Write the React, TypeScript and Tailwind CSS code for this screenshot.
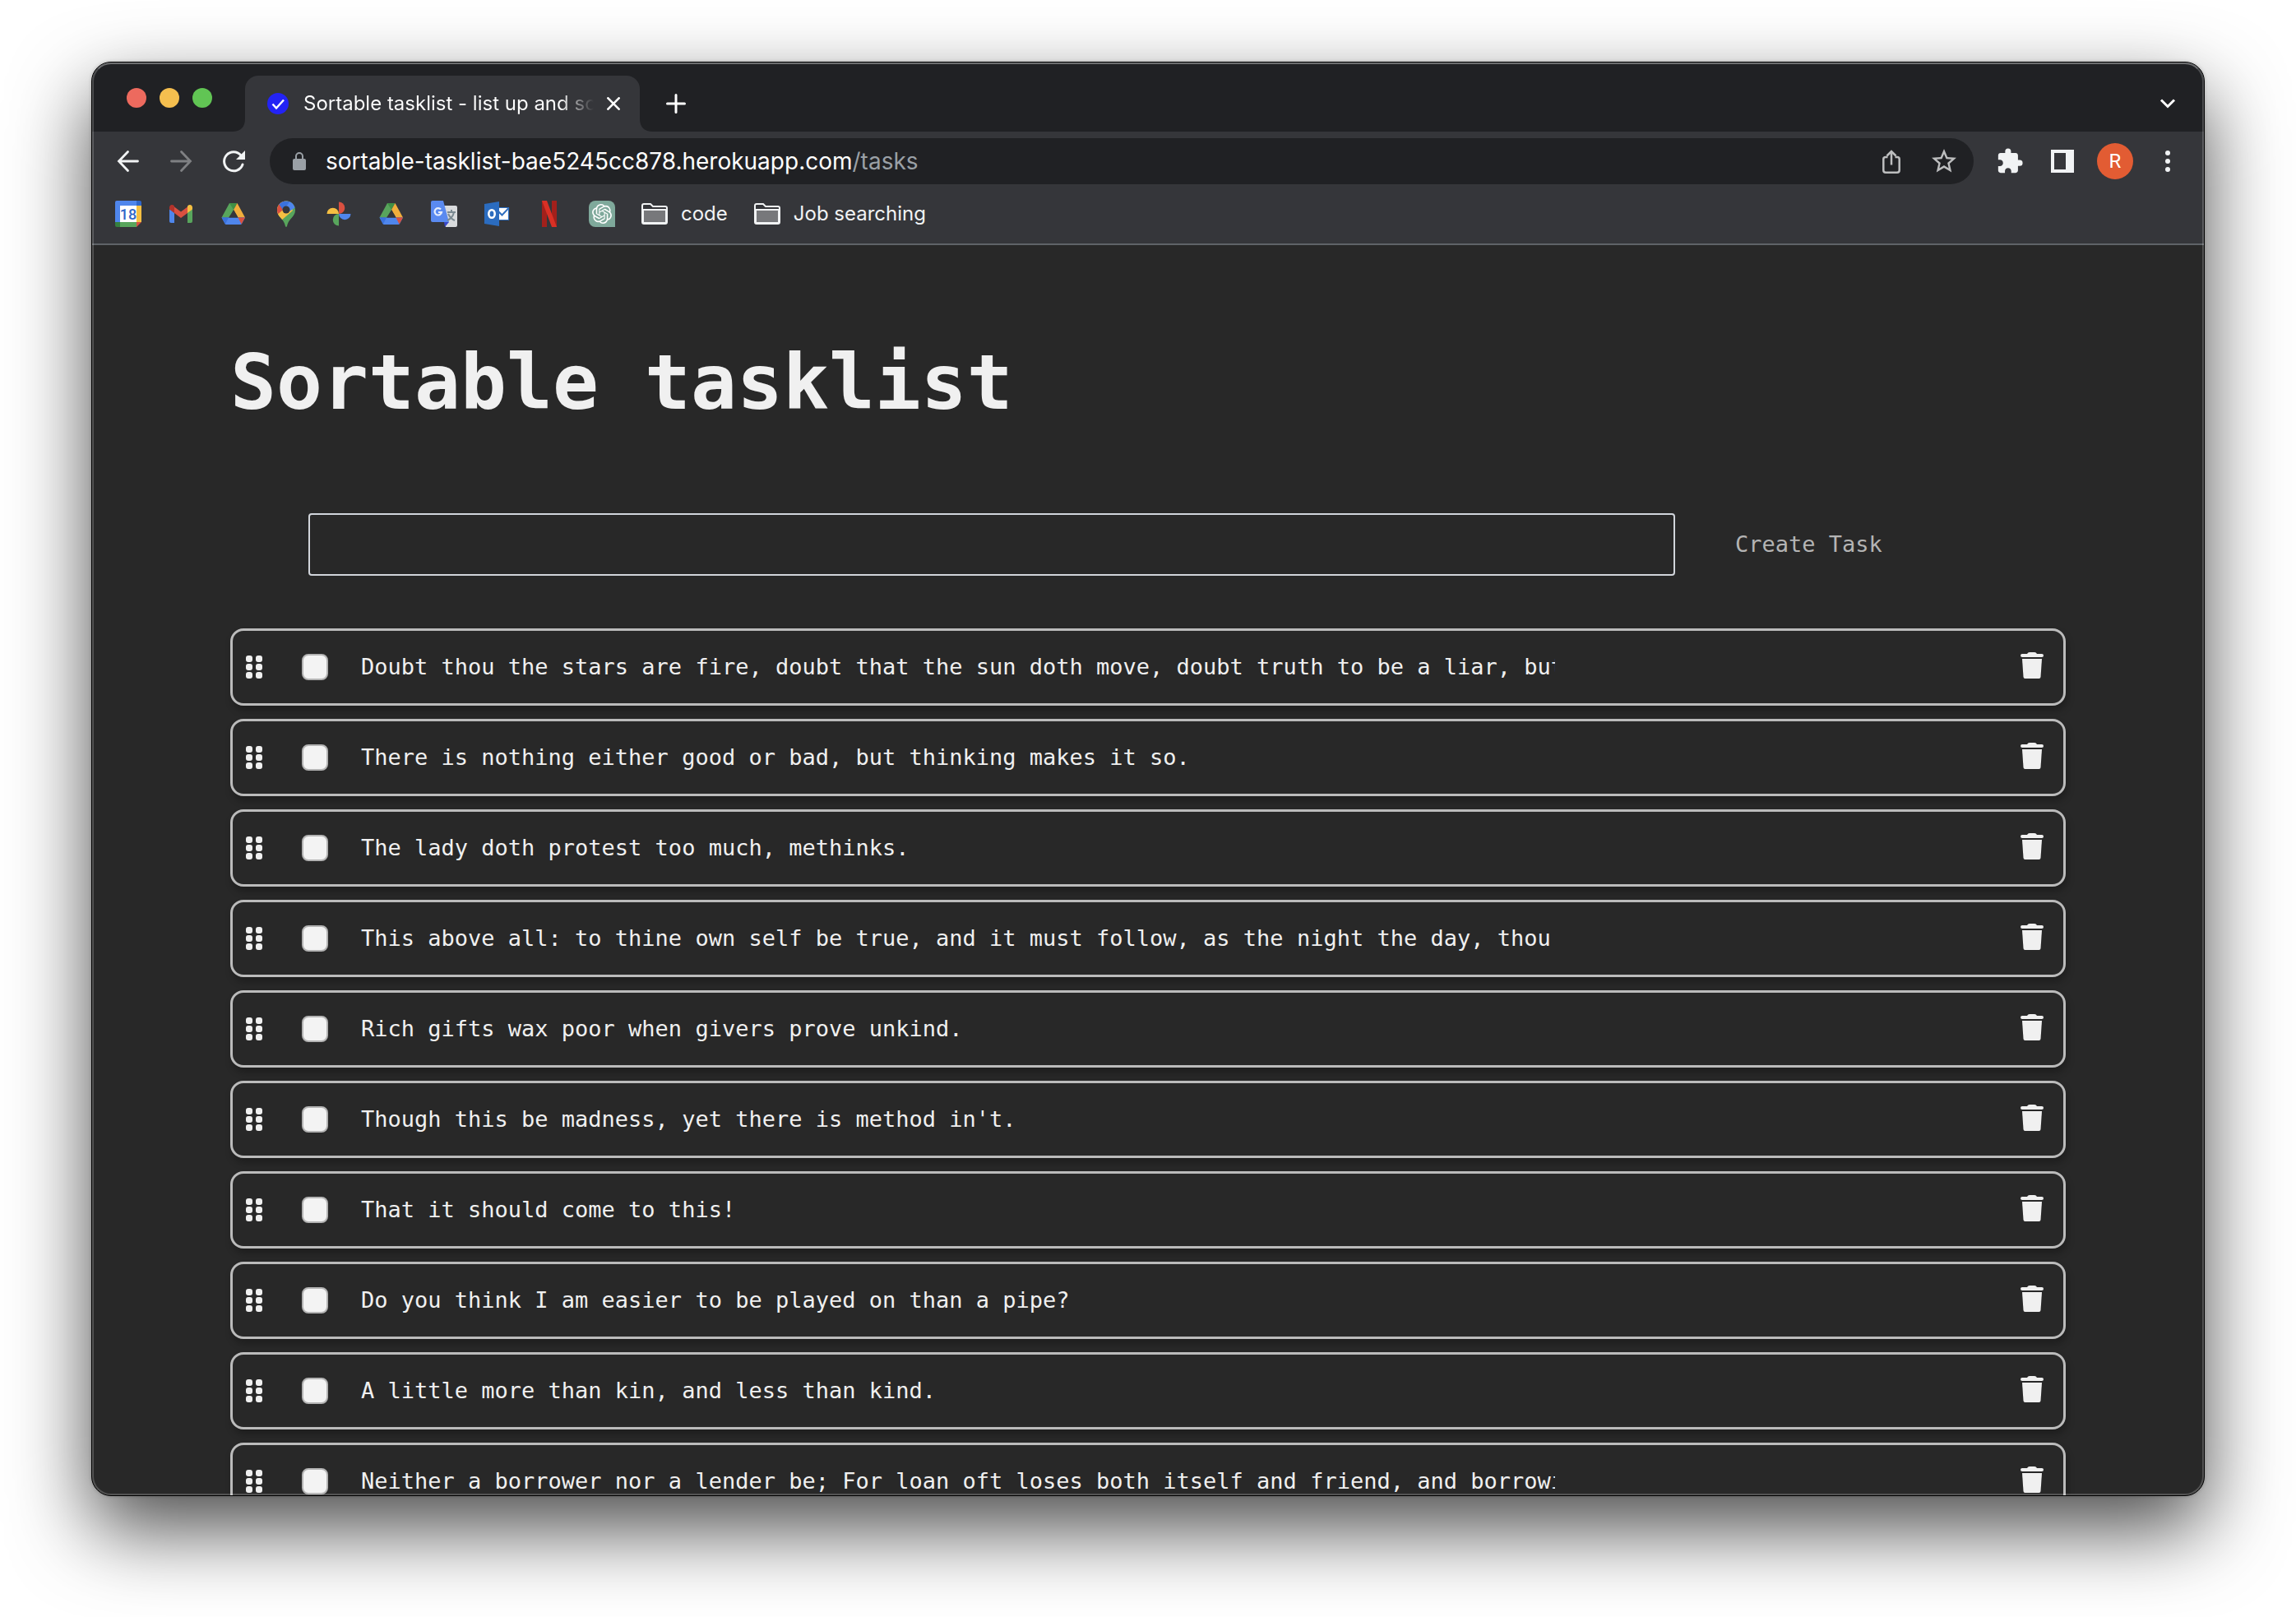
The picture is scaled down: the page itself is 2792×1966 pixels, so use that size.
import React from "react";
import { MdExtension, MdStarBorder } from "react-icons/md";
import { SiOpenai } from "react-icons/si";

const tasks = [
  "Doubt thou the stars are fire, doubt that the sun doth move, doubt truth to be a liar, but never doubt I love.",
  "There is nothing either good or bad, but thinking makes it so.",
  "The lady doth protest too much, methinks.",
  "This above all: to thine own self be true, and it must follow, as the night the day, thou",
  "Rich gifts wax poor when givers prove unkind.",
  "Though this be madness, yet there is method in't.",
  "That it should come to this!",
  "Do you think I am easier to be played on than a pipe?",
  "A little more than kin, and less than kind.",
  "Neither a borrower nor a lender be; For loan oft loses both itself and friend, and borrowing dulls the edge of husbandry.",
];

function Calendar() {
  return (
    <svg viewBox="0 0 32 32" className="size-8">
      <path d="M2 0H26V6H6V26H0V2Q0 0 2 0Z" fill="#4f86ec" />
      <path d="M26 0H30Q32 0 32 2V6H26Z" fill="#2f66c9" />
      <path d="M26 6H32V26H26Z" fill="#f5bf42" />
      <path d="M6 26H26V32H6Z" fill="#58a55c" />
      <path d="M0 26H6V32H2Q0 32 0 30Z" fill="#35803f" />
      <path d="M26 26H32L26 32Z" fill="#d95040" />
      <path d="M6 6H26V26H6Z" fill="#fff" />
      <text x="16" y="22.500" textAnchor="middle" fontSize="18" fontWeight="500" fontFamily="Roboto, sans-serif" fill="#2f66c9">18</text>
    </svg>
  );
}

function Gmail() {
  return (
    <svg viewBox="0 0 32 32" className="size-8">
      <path d="M2 10L8 14.500V27H4Q2 27 2 25Z" fill="#4f86ec" />
      <path d="M30 10L24 14.500V27H28Q30 27 30 25Z" fill="#58a55c" />
      <path d="M8 7.500L16 13.500L24 7.500V15L16 21L8 15Z" fill="#d95040" />
      <path d="M2 8.500C2 5 5.500 4 8 6.500V15L2 10.500Z" fill="#b3332b" />
      <path d="M30 8.500C30 5 26.500 4 24 6.500V15L30 10.500Z" fill="#f5bf42" />
    </svg>
  );
}

function Drive() {
  return (
    <svg viewBox="0 0 32 32" className="size-8">
      <path d="M11 3H16L16 12.500L10 20.500H1.500Z" fill="#58a55c" />
      <path d="M11 3H20.500L16 11Z" fill="#3f8f45" />
      <path d="M20.500 3L30 20.500H21.500L16 11Z" fill="#f1ae3c" />
      <path d="M1.500 20.500H30L26 28Q25.500 29 24.500 29H7Q6 29 5.500 28Z" fill="#4f86ec" />
      <path d="M1.500 20.500H10L6 28.500Z" fill="#3a72dd" />
      <path d="M21.500 20.500H30L25.500 28.500Z" fill="#d95040" />
      <path d="M16 11L21.500 20.500H10.500Z" fill="#35363a" />
    </svg>
  );
}

function Maps() {
  return (
    <svg viewBox="0 0 32 32" className="size-8">
      <defs>
        <clipPath id="pin">
          <path d="M16 0.500C22 0.500 27 5 27 11.500C27 20 18.500 22 17 31Q16 33 15 31C13.500 22 5 20 5 11.500C5 5 10 0.500 16 0.500Z" />
        </clipPath>
      </defs>
      <g clipPath="url(#pin)">
        <path d="M0 0H32V32H0Z" fill="#58a55c" />
        <path d="M0 0H20L16 11L4 25Z" fill="#f5bf42" />
        <path d="M4 18L20 1L24 12L10 24Z" fill="#f5bf42" />
        <path d="M0 0H14L16 8L5 17H0Z" fill="#d95040" />
        <path d="M7 4L16 -2L22 2L12 11Z" fill="#3a72dd" />
        <path d="M21 0L29 7L20 13L14 10Z" fill="#4f86ec" />
      </g>
      <circle cx="16" cy="11" r="4.500" fill="#35363a" />
    </svg>
  );
}

function Photos() {
  return (
    <svg viewBox="0 0 32 32" className="size-8">
      <path d="M16 1.500A7.250 7.250 0 0 1 16 16Z" fill="#d95040" />
      <path d="M30.500 16A7.250 7.250 0 0 1 16 16Z" fill="#4f86ec" />
      <path d="M16 30.500A7.250 7.250 0 0 1 16 16Z" fill="#58a55c" />
      <path d="M1.500 16A7.250 7.250 0 0 1 16 16Z" fill="#f5bf42" />
    </svg>
  );
}

function Translate() {
  return (
    <svg viewBox="0 0 32 32" className="size-8">
      <path d="M13 6H30Q32 6 32 8V30Q32 32 30 32H18Z" fill="#d9dbdd" />
      <path d="M16 26H22L17 32Z" fill="#3a48c8" />
      <path d="M2 0H15L22 26H2Q0 26 0 24V2Q0 0 2 0Z" fill="#5a8af0" />
      <path d="M20 14H30M25 11V14M28 14C27 19 24 22 20 24M21 16C23 20 26 23 29 24" stroke="#7b8a92" strokeWidth="2" fill="none" />
      <path d="M12 10.500A4.200 4.200 0 1 0 13 14H9" stroke="#e6eefc" strokeWidth="2.200" fill="none" />
    </svg>
  );
}

function Outlook() {
  return (
    <svg viewBox="0 0 32 32" className="size-8">
      <path d="M17 8.500H30.500V23.500H17Z" fill="#fff" stroke="#2f6fc0" strokeWidth="1.200" />
      <path d="M18 13L22.500 17.500L30.500 9" stroke="#2f6fc0" strokeWidth="2" fill="none" />
      <path d="M1 4L19 1V31L1 28Z" fill="#2b6cbf" />
      <ellipse cx="10" cy="16" rx="3.700" ry="4.800" stroke="#fff" strokeWidth="2.600" fill="none" />
    </svg>
  );
}

function Netflix() {
  return (
    <svg viewBox="0 0 32 32" className="size-8">
      <path d="M7 0H13V32H7Z" fill="#a3201b" />
      <path d="M19 0H25V32H19Z" fill="#a3201b" />
      <path d="M7 0H13L25 32H19Z" fill="#d93025" />
    </svg>
  );
}

function ChatGpt() {
  return (
    <span className="flex size-8 items-center justify-center rounded-lg rounded-br-none bg-[#7fa99b] text-white">
      <SiOpenai className="size-6" />
    </span>
  );
}

function Folder() {
  return (
    <svg viewBox="0 0 32 28" className="h-7 w-8" fill="none" stroke="#f1f3f4" strokeWidth="2">
      <path d="M2 9H30V24Q30 25 29 25H3Q2 25 2 24Z" fill="#77787b" />
      <path d="M1 4Q1 2 3 2H11L14 5H29Q31 5 31 7V24Q31 26 29 26H3Q1 26 1 24ZM1 9H31" />
    </svg>
  );
}

function Tab() {
  return (
    <div className="relative flex h-17 w-120 items-center rounded-t-2xl bg-[#35363a] pr-5 pl-[27px]">
      <svg viewBox="0 0 16 16" className="absolute bottom-0 -left-4 size-4" fill="#35363a"><path d="M16 0V16H0Q16 16 16 0Z" /></svg>
      <svg viewBox="0 0 16 16" className="absolute -right-4 bottom-0 size-4" fill="#35363a"><path d="M0 0V16H16Q0 16 0 0Z" /></svg>
      <svg viewBox="0 0 26 26" className="size-[26px] shrink-0">
        <circle cx="13" cy="13" r="13" fill="#2323f5" />
        <path d="M6.500 13.500L11 18.500L20 8.500" stroke="#fff" strokeWidth="2.500" fill="none" />
      </svg>
      <span className="ml-[18px] flex-1 overflow-hidden bg-linear-to-r from-white from-88% to-transparent bg-clip-text text-[24px] whitespace-nowrap text-transparent">
        Sortable tasklist - list up and sort
      </span>
      <button aria-label="Close tab" className="ml-3 flex size-6 items-center justify-center">
        <svg viewBox="0 0 16 16" className="size-4" stroke="#fff" strokeWidth="2.600"><path d="M0.500 0.500L15.500 15.500M15.500 0.500L0.500 15.500" /></svg>
      </button>
    </div>
  );
}

function Browser() {
  return (
    <header className="shrink-0 border-b-2 border-[#5f6368] bg-[#35363a] font-[Inter,sans-serif] text-[#f1f3f4]">
      <div className="flex h-21 items-end bg-[#202124] pl-[42px]">
        <div className="flex gap-4 self-center pt-0.5">
          <span className="size-6 rounded-full bg-[#ed6a5e]" />
          <span className="size-6 rounded-full bg-[#f5bf4f]" />
          <span className="size-6 rounded-full bg-[#61c554]" />
        </div>
        <div className="ml-10"><Tab /></div>
        <div className="flex h-17 flex-1 items-center justify-between pr-8 pl-8">
          <button aria-label="New tab">
            <svg viewBox="0 0 24 24" className="size-6" stroke="#fff" strokeWidth="3" strokeLinecap="round"><path d="M12 1.500V22.500M1.500 12H22.500" /></svg>
          </button>
          <button aria-label="Search tabs">
            <svg viewBox="0 0 24 24" className="size-6" stroke="#fff" strokeWidth="3" fill="none"><path d="M4 7.500L12 15.500L20 7.500" /></svg>
          </button>
        </div>
      </div>
      <div className="flex h-18 items-center pr-3 pl-7">
        <div className="flex gap-8">
          <button aria-label="Back">
            <svg viewBox="0 0 32 32" className="size-8" stroke="#f1f3f4" strokeWidth="2.800" strokeLinecap="round" fill="none"><path d="M27.500 16H4.500M15.500 4.500L4.500 16L15.500 27.500" /></svg>
          </button>
          <button aria-label="Forward">
            <svg viewBox="0 0 32 32" className="size-8" stroke="#7f8083" strokeWidth="2.800" strokeLinecap="round" fill="none"><path d="M4.500 16H27.500M16.500 4.500L27.500 16L16.500 27.500" /></svg>
          </button>
          <button aria-label="Reload">
            <svg viewBox="0 0 32 32" className="size-8" fill="none">
              <path d="M27 20A11.500 11.500 0 1 1 25 9" stroke="#f1f3f4" strokeWidth="3" strokeLinecap="round" />
              <path d="M30 3V14H19Z" fill="#f1f3f4" />
            </svg>
          </button>
        </div>
        <div className="ml-7 flex h-14 flex-1 items-center rounded-full bg-[#202124] pr-5 pl-7">
          <svg viewBox="0 0 16 22" className="h-[22px] w-4 shrink-0">
            <rect y="8" width="16" height="14" rx="2" fill="#9aa0a6" />
            <path d="M4 9V5A4 4 0 0 1 12 5V9" stroke="#9aa0a6" strokeWidth="2" fill="none" />
          </svg>
          <span className="ml-6 flex-1 text-[28px] text-white">
            sortable-tasklist-bae5245cc878.herokuapp.com<span className="text-[#9aa0a6]">/tasks</span>
          </span>
          <div className="flex gap-8 text-[#bdbebf]">
            <button aria-label="Share">
              <svg viewBox="0 0 32 32" className="size-8" stroke="#bdbebf" strokeWidth="2.500" fill="none"><path d="M11.500 11H9Q6.300 11 6.300 13.500V27Q6.300 29.700 9 29.700H23Q25.700 29.700 25.700 27V13.500Q25.700 11 23 11H20.500M16 20.500V4.500M10.500 9.500L16 4L21.500 9.500" /></svg>
            </button>
            <button aria-label="Bookmark" className="flex size-8 items-center justify-center"><MdStarBorder className="size-9 shrink-0" /></button>
          </div>
        </div>
        <div className="ml-3 flex items-center">
          <button aria-label="Extensions" className="flex w-16 justify-center"><MdExtension className="size-[34px]" /></button>
          <button aria-label="Side panel" className="flex w-16 justify-center">
            <svg viewBox="0 0 28 28" className="size-7"><path fillRule="evenodd" d="M0 0H28V28H0ZM4 4V24H18V4Z" fill="#f1f3f4" /></svg>
          </button>
          <button aria-label="Profile" className="flex w-16 justify-center">
            <span className="flex size-11 items-center justify-center rounded-full bg-[#e25c33] font-[Roboto,sans-serif] text-[24px] text-white">R</span>
          </button>
          <button aria-label="Menu" className="flex w-16 justify-center">
            <svg viewBox="0 0 32 32" className="size-8" fill="#f1f3f4"><circle cx="16" cy="6" r="3" /><circle cx="16" cy="16" r="3" /><circle cx="16" cy="26" r="3" /></svg>
          </button>
        </div>
      </div>
      <nav className="flex h-16 items-center gap-8 pb-2 pl-7 text-[24px]">
        <a href="#calendar" aria-label="Calendar"><Calendar /></a>
        <a href="#mail" aria-label="Gmail"><Gmail /></a>
        <a href="#drive" aria-label="Drive"><Drive /></a>
        <a href="#maps" aria-label="Maps"><Maps /></a>
        <a href="#photos" aria-label="Photos"><Photos /></a>
        <a href="#files" aria-label="Shared drive"><Drive /></a>
        <a href="#translate" aria-label="Translate"><Translate /></a>
        <a href="#outlook" aria-label="Outlook"><Outlook /></a>
        <a href="#netflix" aria-label="Netflix"><Netflix /></a>
        <a href="#chat" aria-label="ChatGPT"><ChatGpt /></a>
        <button className="flex items-center gap-4"><Folder />code</button>
        <button className="flex items-center gap-4"><Folder />Job searching</button>
      </nav>
    </header>
  );
}

function Grip() {
  return (
    <svg viewBox="0 0 20 28" className="h-7 w-5" fill="#f0f0f0">
      {[0, 10, 20].map((y) => (
        <React.Fragment key={y}>
          <rect x="0" y={y} width="8" height="8" rx="3" />
          <rect x="12" y={y} width="8" height="8" rx="3" />
        </React.Fragment>
      ))}
    </svg>
  );
}

function Task({ id, text }: { id: string; text: string }) {
  return (
    <li className="flex h-[94px] shrink-0 items-center rounded-2xl border-3 border-[#bbbbbb] pr-6 pl-4 shadow-[2px_6px_8px_rgba(0,0,0,0.25)]">
      <button aria-label="Move task"><Grip /></button>
      <input
        id={id}
        type="checkbox"
        className="ml-12 size-8 shrink-0 appearance-none rounded-lg border-2 border-[#b4b4b4] bg-[#f3f3f3]"
      />
      <label htmlFor={id} className="ml-10 w-[1452px] overflow-hidden whitespace-nowrap">{text}</label>
      <button aria-label="Delete task" className="ml-auto pb-1">
        <svg viewBox="0 0 28 32" className="h-8 w-7" fill="#f0f0f0">
          <path d="M2 2H8Q9 0 11 0H17Q19 0 20 2H26Q28 2 28 4Q28 6 26 6H2Q0 6 0 4Q0 2 2 2Z" />
          <path d="M2 8H26L24.500 30Q24.300 32 22.500 32H5.500Q3.700 32 3.500 30Z" />
        </svg>
      </button>
    </li>
  );
}

export default function App() {
  return (
    <div className="flex h-screen flex-col bg-white px-[111px] pt-[75px] pb-[147px]">
      <div className="relative flex min-h-0 flex-1 flex-col rounded-3xl border border-black bg-[#282828] shadow-[0_40px_96px_rgba(0,0,0,0.7),0_0_4px_rgba(0,0,0,0.2)]">
        <div className="flex min-h-0 flex-1 flex-col overflow-hidden rounded-[23px]">
          <Browser />
          <main className="min-h-0 flex-1 overflow-hidden px-42 font-['DejaVu_Sans_Mono',monospace] text-[27px] text-[#f0f0f0]">
            <h1 className="pt-26 text-[93px] leading-[126px] font-bold">Sortable tasklist</h1>
            <form className="mt-24 flex items-center pl-[95px]" onSubmit={(e) => e.preventDefault()}>
              <input aria-label="New task" className="h-[76px] w-[1662px] rounded-sm border-2 border-[#d1d5db] bg-transparent px-4" />
              <button className="ml-[73px] text-[#b4b4b4]">Create Task</button>
            </form>
            <ul className="mt-16 flex flex-col gap-4">
              {tasks.map((text, i) => (
                <Task key={text} id={`task-${i}`} text={text} />
              ))}
            </ul>
          </main>
        </div>
        <div className="pointer-events-none absolute inset-0 rounded-[23px] border-2 border-white/20 border-t-white/35" />
      </div>
    </div>
  );
}
